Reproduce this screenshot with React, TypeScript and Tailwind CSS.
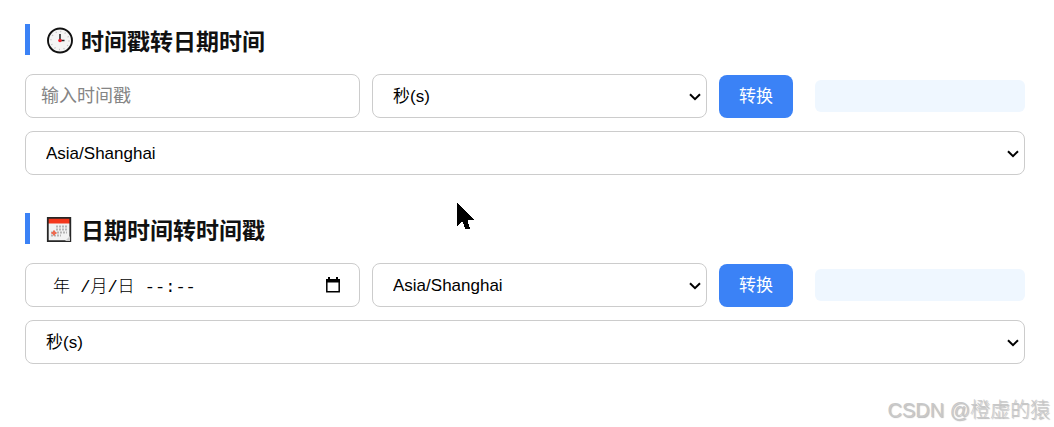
import { useState } from 'react'

const fieldClass =
  'h-11 w-full rounded-lg border border-[#cccccc] bg-white text-black outline-none focus:border-[#3b82f6]'

const ClockIcon = () => (
  <svg width="27" height="27" viewBox="0 0 27 27" fill="none" aria-hidden="true">
    <circle cx="14" cy="13.5" r="12" fill="#f5f5f5" stroke="#111" strokeWidth="1.9" />
    <circle cx="14" cy="13.5" r="9" stroke="#c0c0c0" strokeWidth="1.5" strokeDasharray="1 3.712" />
    <path d="M14 13.5V7M14 13.5H18.500" stroke="#222" strokeWidth="1.5" />
    <circle cx="14" cy="13.5" r="1.8" fill="#f0202c" />
  </svg>
)

const CalendarIcon = () => (
  <svg width="27" height="27" viewBox="0 0 27 27" fill="none" aria-hidden="true">
    <path d="M1 1h24v25H1z" fill="#f2f2f2" />
    <path d="M2 2h22v5.500H2z" fill="#f4371b" />
    <path d="M1.800 1.800h22.500v23.400H1.800z" stroke="#262626" strokeWidth="1.8" />
    <path d="M10 10.500h11M10 13.500h11M5 16.500h16M5 19.500h10" stroke="#b4b4b4" strokeWidth="2" strokeDasharray="2 1" />
    <path d="M8 14.500v5M5.500 17h5" stroke="#ee6a50" strokeWidth="2" />
    <path d="M19 25l5-5v5z" fill="#ccc" />
  </svg>
)

const PickerIcon = () => (
  <svg width="14" height="16" viewBox="0 0 14 16" fill="none">
    <path d="M.8 3h12.400v11.700H.8z" stroke="currentColor" strokeWidth="1.5" />
    <path d="M0 2h14v3.500H0zM2 0h2v3H2zM10 0h2v3h-2z" fill="currentColor" />
  </svg>
)

const ChevronIcon = () => (
  <svg width="12" height="8" viewBox="0 0 12 8" fill="none">
    <path d="M1 1.200l5 5 5-5" stroke="currentColor" strokeWidth="2" />
  </svg>
)

const PointerIcon = () => (
  <svg width="17" height="26" viewBox="0 0 17 26" shapeRendering="crispEdges">
    <path d="M0 0L17 17H10.500L13 26H8.500L5.500 18.500L0 23z" fill="#000" />
  </svg>
)

interface SelectFieldProps {
  label: string
  options: string[]
}

function SelectField({ label, options }: SelectFieldProps) {
  return (
    <div className="relative min-w-0 flex-1">
      <select aria-label={label} className={`${fieldClass} appearance-none px-5 pt-0.5 text-[17px]`}>
        {options.map(o => (
          <option key={o}>{o}</option>
        ))}
      </select>
      <span className="pointer-events-none absolute inset-y-0 right-1.5 flex items-center pt-0.5 text-black">
        <ChevronIcon />
      </span>
    </div>
  )
}

function SectionTitle({ icon, children }: { icon: React.ReactNode; children: React.ReactNode }) {
  return (
    <h2 className="flex h-[31px] items-center gap-2 border-l-5 border-[#3b82f6] pt-0.5 pl-4 text-[23px] font-bold text-[#111111]">
      {icon}
      <span className="pt-1">{children}</span>
    </h2>
  )
}

function ConvertButton({ onClick }: { onClick?: () => void }) {
  return (
    <button
      type="button"
      onClick={onClick}
      className="h-[43px] shrink-0 rounded-lg bg-[#3b82f6] px-5 pt-0.5 text-[17px] text-white hover:bg-blue-600"
    >
      转换
    </button>
  )
}

const units = ['秒(s)', '毫秒(ms)']
const zones = ['Asia/Shanghai', 'UTC', 'America/New_York', 'Europe/London']

export default function App() {
  const [timestamp, setTimestamp] = useState('')
  const [dateTime, setDateTime] = useState('年 /月/日 --:--')

  return (
    <main className="relative bg-white pt-6 pr-[29px] pb-[62px] pl-[25px] font-['Liberation_Sans','Noto_Sans_CJK_SC',sans-serif]">
      <section>
        <SectionTitle icon={<ClockIcon />}>时间戳转日期时间</SectionTitle>
        <div className="mt-[19px] flex items-center gap-3">
          <div className="min-w-0 flex-1">
            <input
              type="text"
              aria-label="时间戳"
              placeholder="输入时间戳"
              value={timestamp}
              onChange={e => setTimestamp(e.target.value)}
              className={`${fieldClass} px-[15px] text-[18px] placeholder:text-[#858585]`}
            />
          </div>
          <SelectField label="单位" options={units} />
          <ConvertButton />
          <output className="ml-2.5 h-8 w-[210px] shrink-0 rounded-md bg-[#eff7ff]" />
        </div>
        <div className="mt-[13px] flex">
          <SelectField label="时区" options={zones} />
        </div>
      </section>

      <section className="mt-[38px]">
        <SectionTitle icon={<CalendarIcon />}>日期时间转时间戳</SectionTitle>
        <div className="mt-[19px] flex items-center gap-3">
          <div className="relative min-w-0 flex-1">
            <input
              type="text"
              aria-label="日期时间"
              value={dateTime}
              onChange={e => setDateTime(e.target.value)}
              className={`${fieldClass} pr-12 pb-0.5 pl-[27px] font-['Liberation_Mono','Noto_Sans_CJK_SC',monospace] text-[17px] font-light`}
            />
            <button type="button" aria-label="选择日期" className="absolute inset-y-0 right-5 flex items-center text-black">
              <PickerIcon />
            </button>
          </div>
          <SelectField label="时区" options={zones} />
          <ConvertButton />
          <output className="ml-2.5 h-8 w-[210px] shrink-0 rounded-md bg-[#eff7ff]" />
        </div>
        <div className="mt-[13px] flex">
          <SelectField label="单位" options={units} />
        </div>
      </section>

      <div className="pointer-events-none absolute top-[203px] left-[457px]">
        <PointerIcon />
      </div>
      <span className="absolute right-1 bottom-0.5 text-[20px] leading-7 font-light text-[#c8c8c8] [text-shadow:1px_1px_1px_#bbbbbb]">
        CSDN @橙虚的猿
      </span>
    </main>
  )
}
